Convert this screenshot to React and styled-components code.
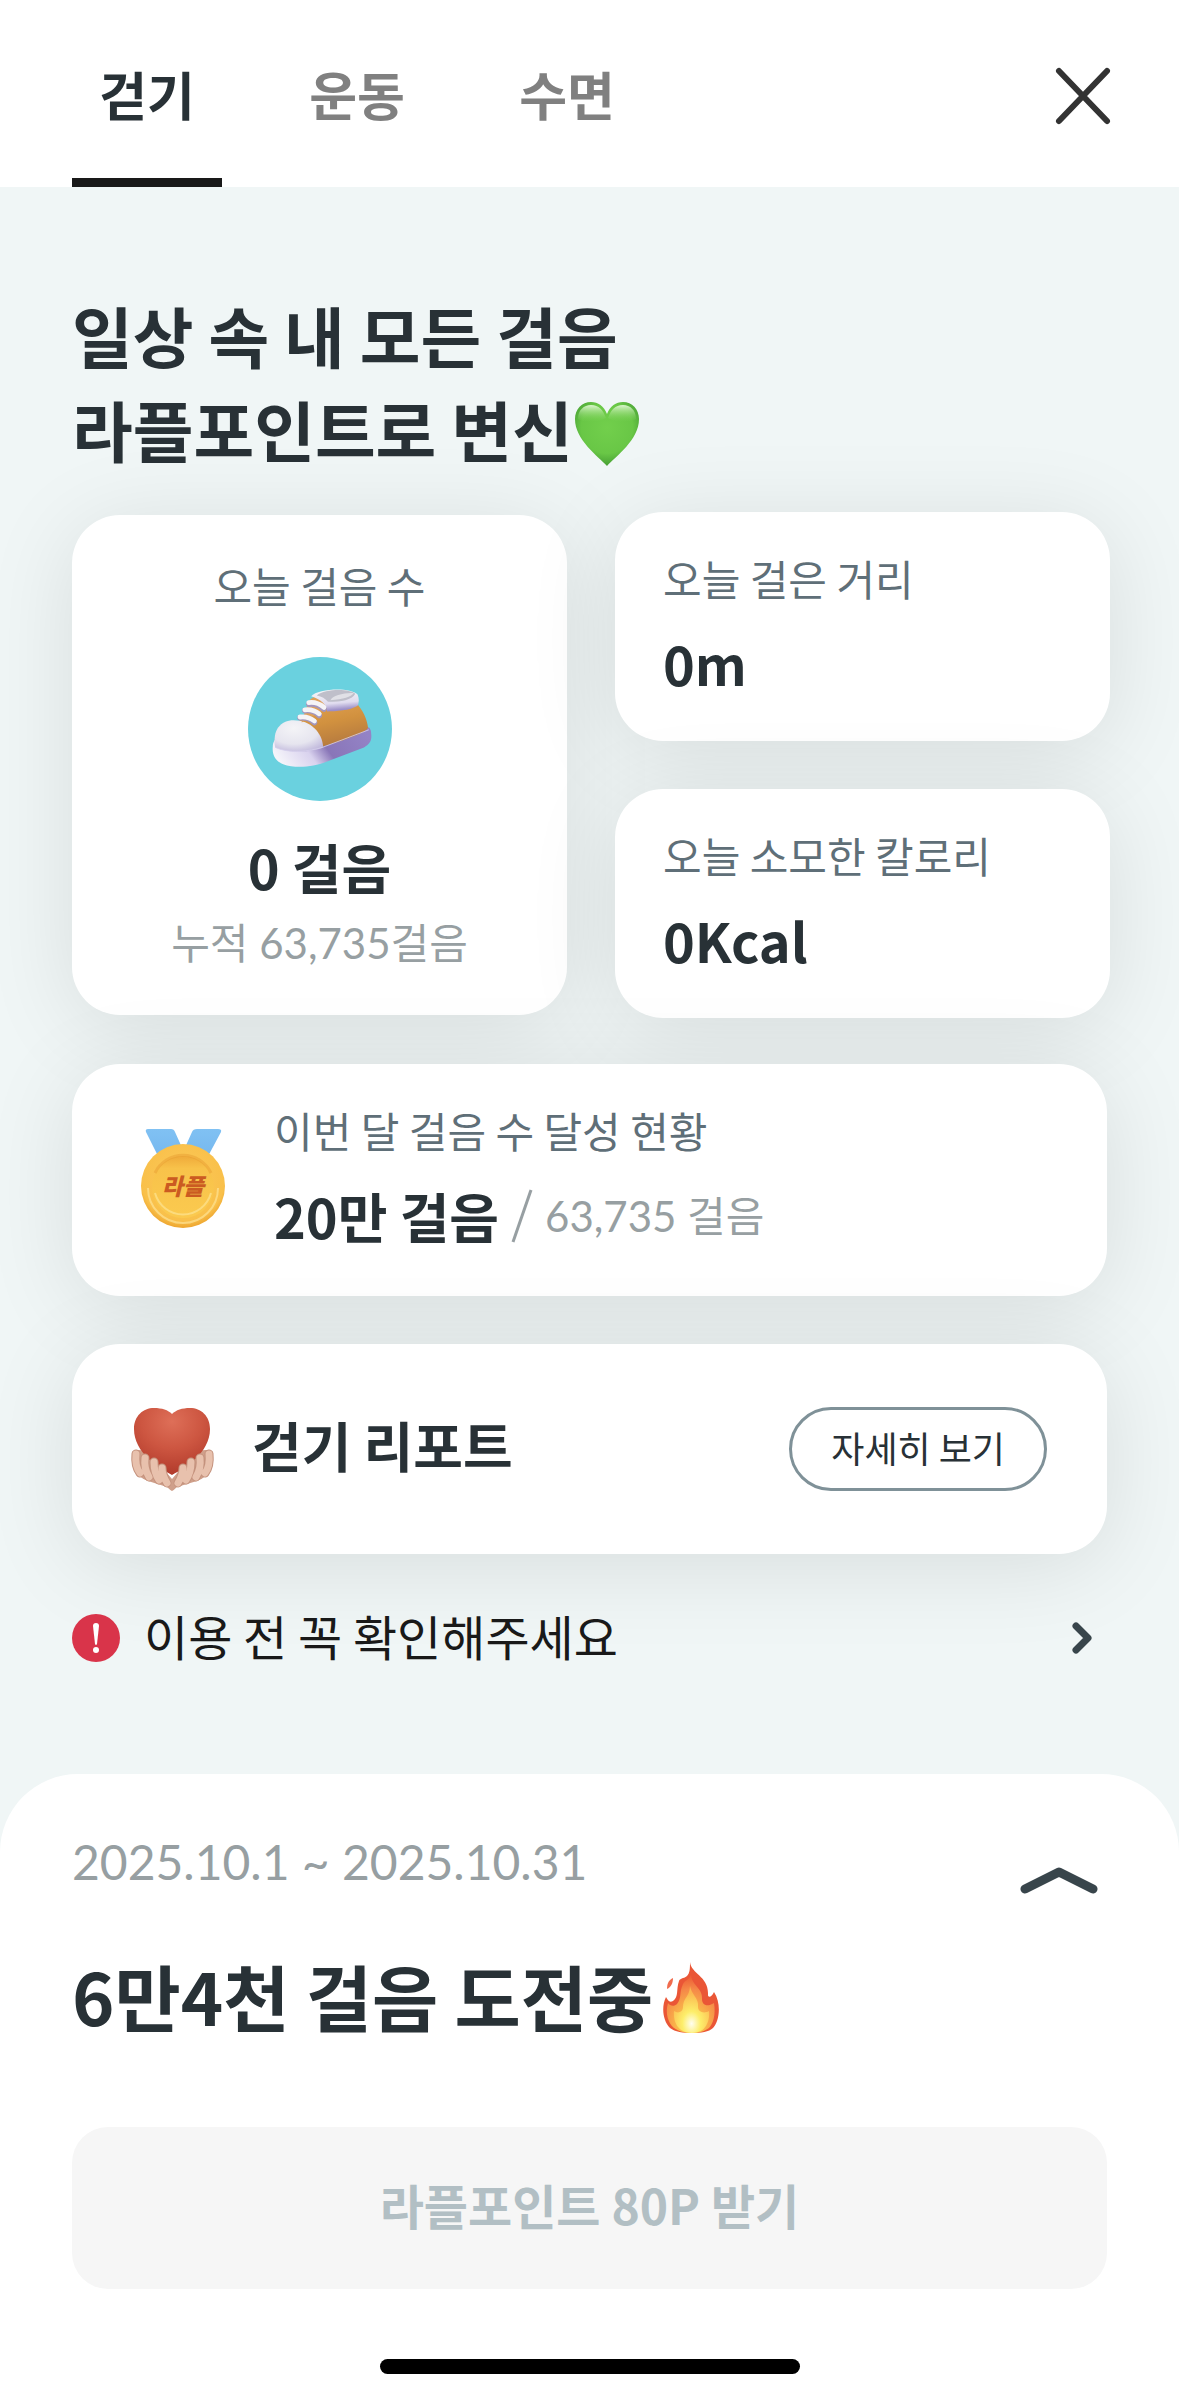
import React, { useState } from 'react';
import styled, { createGlobalStyle } from 'styled-components';

const GlobalStyle = createGlobalStyle`
  * {
    box-sizing: border-box;
  }

  body {
    margin: 0;
    background-color: #fff;
    color: #283136;
    font-family: 'Noto Sans CJK KR', sans-serif;
  }

  button {
    border: none;
    background: none;
    padding: 0;
    color: inherit;
    font-family: inherit;
    cursor: pointer;
  }

  h1, h2, p {
    margin: 0;
  }

  svg {
    display: block;
    flex-shrink: 0;
  }
`;

const Page = styled.div`
  display: flex;
  flex-direction: column;
  min-height: 100vh;
  background-color: #f0f6f6;
`;

const Header = styled.header`
  display: flex;
  justify-content: space-between;
  align-items: stretch;
  padding: 0 66px 0 72px;
  background-color: #fff;
`;

const TabList = styled.nav`
  display: flex;
  gap: 60px;
`;

const Tab = styled.button`
  width: 150px;
  padding: 54px 0 44px;
  border-bottom: 9px solid ${(props) => (props.$active ? '#191919' : 'transparent')};
  color: ${(props) => (props.$active ? '#283136' : '#808080')};
  font-size: 52px;
  line-height: 80px;
  font-weight: 700;
`;

const CloseButton = styled.button`
  display: flex;
  align-items: center;
  padding-top: 4px;
`;

const Main = styled.main`
  display: flex;
  flex-direction: column;
  padding: 100px 72px 100px;
`;

const Title = styled.h1`
  margin-bottom: 37px;
  font-size: 66px;
  line-height: 94px;
  font-weight: 700;

  svg {
    display: inline-block;
    vertical-align: -10px;
  }
`;

const Stats = styled.div`
  display: flex;
  align-items: center;
  gap: 48px;
  margin-right: -3px;
  margin-bottom: 46px;
`;

const StatColumn = styled.div`
  flex: 1;
  display: flex;
  flex-direction: column;
  gap: 48px;
`;

const Card = styled.section`
  border-radius: 48px;
  background-color: #fff;
  box-shadow: 0 12px 90px rgba(0, 0, 0, 0.1);
`;

const StepCard = styled(Card)`
  flex: 1;
  display: flex;
  flex-direction: column;
  align-items: center;
  padding: 40px 0 42px;

  svg {
    margin: 42px 0 26px;
  }
`;

const StatCard = styled(Card)`
  padding: 36px 48px 38px;
`;

const GoalCard = styled(Card)`
  display: flex;
  align-items: center;
  gap: 46px;
  margin-bottom: 48px;
  padding: 36px 66px 40px;
`;

const ReportCard = styled(Card)`
  display: flex;
  align-items: center;
  padding: 63px 60px 63px 58px;
`;

const Label = styled.p`
  color: #5f6f78;
  font-size: 42px;
  line-height: 60px;
`;

const Value = styled.p`
  font-size: 54px;
  line-height: 80px;
  font-weight: 700;

  ${Label} + & {
    margin-top: 15px;
  }
`;

const Total = styled.span`
  color: #979fa2;
  font-family: Lato, 'Noto Sans CJK KR', sans-serif;
  font-size: 42px;
  line-height: 60px;
  font-weight: 400;

  ${StepCard} & {
    margin-top: 6px;
  }
`;

const GoalRow = styled.div`
  display: flex;
  align-items: center;
  gap: 12px;
  margin-top: 16px;
`;

const ReportTitle = styled.h2`
  flex: 1;
  margin-left: 36px;
  padding-bottom: 8px;
  font-size: 54px;
  line-height: 76px;
  font-weight: 700;
`;

const DetailButton = styled.button`
  padding: 11px 39px 15px;
  border: 3px solid #7f9198;
  border-radius: 42px;
  font-size: 36px;
  line-height: 52px;
`;

const Notice = styled.button`
  display: flex;
  align-items: center;
  gap: 24px;
  width: 100%;
  margin-top: 48px;
  padding-right: 15px;
  color: #191919;
  font-size: 48px;
  line-height: 66px;
  text-align: left;
`;

const NoticeText = styled.span`
  flex: 1;
  padding-bottom: 6px;
`;

const Sheet = styled.section`
  flex: 1;
  display: flex;
  flex-direction: column;
  padding: 52px 72px 24px;
  border-radius: 78px 78px 0 0;
  background-color: #fff;
`;

const SheetHead = styled.div`
  display: flex;
  justify-content: space-between;
  align-items: flex-start;
  padding-right: 9px;
`;

const Period = styled.p`
  color: #979fa2;
  font-family: Lato, 'Noto Sans CJK KR', sans-serif;
  font-size: 48px;
  line-height: 72px;
`;

const ToggleButton = styled.button`
  padding-top: 40px;
`;

const ChallengeTitle = styled.h2`
  display: flex;
  align-items: center;
  gap: 10px;
  margin-top: 45px;
  font-size: 72px;
  line-height: 104px;
  font-weight: 700;

  svg {
    margin-top: 6px;
  }
`;

const ReceiveButton = styled.button`
  margin-top: 80px;
  padding: 41px 0 49px;
  border-radius: 36px;
  background-color: #f6f6f6;
  color: #b2bfc4;
  font-size: 48px;
  line-height: 72px;
  font-weight: 700;
`;

const HomeBar = styled.div`
  align-self: center;
  width: 420px;
  height: 15px;
  margin-top: auto;
  border-radius: 8px;
  background-color: #000;
`;

const CloseIcon = () => (
  <svg width="60" height="60" viewBox="0 0 60 60" fill="none" stroke="#333" strokeWidth="6" strokeLinecap="round">
    <path d="M6 5 54 55M54 5 6 55" />
  </svg>
);

const GreenHeart = () => (
  <svg width="68" height="66" viewBox="0 0 68 66">
    <defs>
      <radialGradient id="leaf" cx=".5" cy=".4" r=".62">
        <stop offset="0" stopColor="#72cf4c" />
        <stop offset=".65" stopColor="#69c746" />
        <stop offset="1" stopColor="#429a31" />
      </radialGradient>
      <linearGradient id="leafShine" x2="0" y2="1">
        <stop offset="0" stopColor="#e2f8d6" stopOpacity=".95" />
        <stop offset="1" stopColor="#7dd457" stopOpacity="0" />
      </linearGradient>
    </defs>
    <path d="M34 65C25 55 2 39 2 18 2 8 9 1 18 1c7 0 13 4 16 12C37 5 43 1 50 1c9 0 16 7 16 17 0 21-23 37-32 47z" fill="url(#leaf)" />
    <path d="M5 18C5 9 11 4 18 4c8 0 12 5 15 13-6 4-20 6-28 1zM63 18c0-9-6-14-13-14-8 0-12 5-15 13 6 4 20 6 28 1z" fill="url(#leafShine)" />
  </svg>
);

const ShoeIcon = () => (
  <svg width="144" height="144" viewBox="0 0 180 180">
    <defs>
      <radialGradient id="toe" cx=".4" cy=".25" r=".85">
        <stop offset="0" stopColor="#f4f4f7" />
        <stop offset=".6" stopColor="#e6e5ef" />
        <stop offset="1" stopColor="#bcb3da" />
      </radialGradient>
      <linearGradient id="sole" x1="0" y1=".6" x2="1" y2=".3">
        <stop offset="0" stopColor="#f5f4fa" />
        <stop offset=".32" stopColor="#d9d2ee" />
        <stop offset=".52" stopColor="#8976b8" />
        <stop offset="1" stopColor="#9483c6" />
      </linearGradient>
      <linearGradient id="leather" x1=".3" y1="0" x2=".6" y2="1">
        <stop offset="0" stopColor="#e2a252" />
        <stop offset=".5" stopColor="#d1913f" />
        <stop offset="1" stopColor="#b3783f" />
      </linearGradient>
      <linearGradient id="collar" x1="0" y1="0" x2=".2" y2="1">
        <stop offset=".2" stopColor="#f1f1f5" />
        <stop offset=".7" stopColor="#e0dcef" />
        <stop offset="1" stopColor="#9c8fc8" />
      </linearGradient>
    </defs>
    <circle cx="90" cy="90" r="90" fill="#6ad1df" />
    <path d="M31 112c0-6 3-10 8-13l108-11c4-2 7 2 7 8 1 9-2 13-9 17l-47 18c-15 6-38 9-54 3-10-4-14-12-13-22z" fill="url(#sole)" />
    <path d="M64 80c9-7 12-28 24-30l48 8c7 8 13 19 14 30-1 7-34 17-57 24z" fill="url(#leather)" />
    <path d="M34 113C30 91 41 79 57 79c21 0 36 15 37 34-14 6-41 8-60 0z" fill="url(#toe)" />
    <path d="M76 55c6-7 17-8 20-3 3 6 2 11 0 14L67 82z" fill="#dda05a" />
    <path d="M79 49c8-9 48-12 58-2 2 5 2 10 0 14-9 6-28 7-38 7-1-9-8-15-20-19z" fill="url(#collar)" />
    <path d="M86 48c10-8 40-9 48-2-4 8-17 10-34 10-3-4-8-7-14-8z" fill="#bfbfca" />
    <path d="M103 54c2-6 19-10 29-9-3 5-13 8-29 9z" fill="#e0e0e6" />
    <path d="M76 59c7-1 13 1 19 6M71 67c8-1 13 1 18 6M65 76c8-1 13 1 18 6" fill="none" stroke="#a296be" strokeWidth="7" strokeLinecap="round" />
    <path d="M76 57c7-1 13 1 19 6M71 66c8-1 13 1 18 5M65 75c8-1 13 1 18 5" fill="none" stroke="#f5f4f6" strokeWidth="6" strokeLinecap="round" />
    <path d="M34 113c18 8 42 5 59 0l58-22" fill="none" stroke="#d7d0ed" strokeWidth="1" />
  </svg>
);

const MedalIcon = () => (
  <svg width="90" height="102" viewBox="0 0 90 102">
    <defs>
      <linearGradient id="ribbon" x2="0" y2="1">
        <stop offset="0" stopColor="#80c1f3" />
        <stop offset="1" stopColor="#75b7ee" />
      </linearGradient>
      <radialGradient id="gold" cx=".5" cy=".42" r=".58">
        <stop offset="0" stopColor="#fbc95a" />
        <stop offset=".85" stopColor="#f9c04a" />
        <stop offset="1" stopColor="#eda52f" />
      </radialGradient>
      <linearGradient id="coin" x2="0" y2="1">
        <stop offset="0" stopColor="#efaa3a" />
        <stop offset=".2" stopColor="#f8c24a" />
        <stop offset="1" stopColor="#fbca4f" />
      </linearGradient>
    </defs>
    <path d="M10 2h23q3 0 4 3l9 20-24 8L8 5q-1-3 2-3zM80 2H59q-4 0-5 3l-9 20 23 8L83 5q1-3-3-3z" fill="url(#ribbon)" />
    <circle cx="45" cy="59" r="42" fill="url(#gold)" />
    <circle cx="45" cy="60" r="31" fill="url(#coin)" />
    <path d="M17 46a31 31 0 0 1 56 0" fill="none" stroke="#e79b2e" strokeWidth="3" opacity=".45" />
    <path d="M10 61a35 35 0 0 0 70 0" fill="none" stroke="#fde294" strokeWidth="2" opacity=".7" />
    <path d="M17 66a29 29 0 0 0 56 0" fill="none" stroke="#fde08a" strokeWidth="2" opacity=".8" />
    <text x="45" y="68" textAnchor="middle" fontSize="23" fontWeight="900" fontStyle="italic" fill="#cb5b21">라플</text>
  </svg>
);

const HeartHandsIcon = () => (
  <svg width="86" height="84" viewBox="0 0 86 84">
    <defs>
      <radialGradient id="redHeart" cx=".5" cy=".2" r=".8">
        <stop offset="0" stopColor="#de6f58" />
        <stop offset=".5" stopColor="#cd5641" />
        <stop offset="1" stopColor="#b13a2b" />
      </radialGradient>
    </defs>
    <path d="M2 46c0-4 12-4 18 0l22 26 22-26c6-4 19-4 19 0 1 14-3 23-16 28l-20 6q-3 3-5 4-2-1-5-4l-19-6C5 69 1 60 2 46z" fill="#cf9f8a" />
    <path d="M42 68C29 61 4 46 4 22 4 9 13 1 24 1c8 0 14 2 18 6 4-4 10-6 18-6 11 0 20 8 20 21 0 24-25 39-38 46z" fill="url(#redHeart)" />
    <g fill="none" strokeLinecap="round">
      <path stroke="#c4927d" strokeWidth="9" d="M6 47c-1 9 1 15 4 19M15 51c-1 8 1 14 4 19M24 55c0 7 1 12 5 18M32 61c0 6 2 10 5 15M79 47c1 9-1 15-4 19M70 51c1 8-1 14-4 19M61 55c0 7-1 12-5 18M53 61c0 6-2 10-5 15" />
      <path stroke="#e8c1ad" strokeWidth="7" d="M6 47c-1 9 1 15 4 19M15 51c-1 8 1 14 4 19M24 55c0 7 1 12 5 18M32 61c0 6 2 10 5 15M79 47c1 9-1 15-4 19M70 51c1 8-1 14-4 19M61 55c0 7-1 12-5 18M53 61c0 6-2 10-5 15" />
    </g>
  </svg>
);

const AlertIcon = () => (
  <svg width="48" height="48" viewBox="0 0 48 48">
    <circle cx="24" cy="24" r="24" fill="#d9344a" />
    <path d="M21 12q0-3 3-3t3 3l-2 18q-1 2-2 0z" fill="#fff" />
    <circle cx="24" cy="36" r="3" fill="#fff" />
  </svg>
);

const ChevronRight = () => (
  <svg width="20" height="32" viewBox="0 0 20 32" fill="none" stroke="#38454b" strokeWidth="7" strokeLinecap="round" strokeLinejoin="round">
    <path d="m4 4 12 12L4 28" />
  </svg>
);

const ChevronUp = ({ flipped }) => (
  <svg width="78" height="28" viewBox="0 0 78 28" fill="none" stroke="#38454b" strokeWidth="9" strokeLinecap="round" strokeLinejoin="round">
    <path d={flipped ? 'm5 5 34 17L73 5' : 'm5 23 34-17 34 17'} />
  </svg>
);

const FlameIcon = () => (
  <svg width="58" height="74" viewBox="0 0 58 74">
    <defs>
      <radialGradient id="fire" cx=".5" cy=".85" r=".8">
        <stop offset="0" stopColor="#fde45b" />
        <stop offset=".35" stopColor="#fab84a" />
        <stop offset=".75" stopColor="#f58a48" />
        <stop offset="1" stopColor="#ee6238" />
      </radialGradient>
      <radialGradient id="ember" cx=".5" cy=".8" r=".65">
        <stop offset="0" stopColor="#fffef0" />
        <stop offset=".4" stopColor="#fdee6a" />
        <stop offset="1" stopColor="#fbb850" />
      </radialGradient>
    </defs>
    <path d="M27 1c1 12 19 14 18 33 0 3 4 2 6-3 8 12 5 30-1 36-4 4-12 5-21 5s-17-1-22-5C0 60-2 46 3 36c2 3 3 6 7 4 6-4 3-12 6-20 1-3 4-2 8-5 3-3 3-8 3-14z" fill="#ea5636" />
    <path d="M28 14c1 11 12 13 11 24 0 5 4 9 12 4 2 12-1 21-5 25-4 3-10 5-17 5s-14-2-18-5C5 62 2 52 5 42c2 3 6 4 9 1 5-6 2-12 6-20 2-4 6-4 8-9z" fill="url(#fire)" />
    <path d="M27 25c1 8 9 12 8 21 0 5 6 7 11 4 1 10-3 22-17 22S10 61 11 50c4 3 9 1 9-4 0-9 7-11 7-21z" fill="url(#ember)" />
    <path d="M10 17c-4 2-6 5-6 11 4-2 6-6 6-11z" fill="#f06b4d" />
  </svg>
);

const tabs = ['걷기', '운동', '수면'];

const stats = [
  { label: '오늘 걸은 거리', value: '0m' },
  { label: '오늘 소모한 칼로리', value: '0Kcal' },
];

const App = () => {
  const [activeTab, setActiveTab] = useState('걷기');
  const [open, setOpen] = useState(true);

  return (
    <Page>
      <GlobalStyle />
      <Header>
        <TabList>
          {tabs.map((tab) => (
            <Tab key={tab} $active={tab === activeTab} onClick={() => setActiveTab(tab)}>
              {tab}
            </Tab>
          ))}
        </TabList>
        <CloseButton aria-label="닫기"><CloseIcon /></CloseButton>
      </Header>
      <Main>
        <Title>
          일상 속 내 모든 걸음
          <br />
          라플포인트로 변신
          <GreenHeart />
        </Title>
        <Stats>
          <StepCard>
            <Label>오늘 걸음 수</Label>
            <ShoeIcon />
            <Value>0 걸음</Value>
            <Total>누적 63,735걸음</Total>
          </StepCard>
          <StatColumn>
            {stats.map((stat) => (
              <StatCard key={stat.label}>
                <Label>{stat.label}</Label>
                <Value>{stat.value}</Value>
              </StatCard>
            ))}
          </StatColumn>
        </Stats>
        <GoalCard>
          <MedalIcon />
          <div>
            <Label>이번 달 걸음 수 달성 현황</Label>
            <GoalRow>
              <Value>20만 걸음</Value>
              <svg width="22" height="54" viewBox="0 0 22 54" stroke="#979fa2" strokeWidth="3">
                <path d="M20 1 2 53" />
              </svg>
              <Total>63,735 걸음</Total>
            </GoalRow>
          </div>
        </GoalCard>
        <ReportCard>
          <HeartHandsIcon />
          <ReportTitle>걷기 리포트</ReportTitle>
          <DetailButton>자세히 보기</DetailButton>
        </ReportCard>
        <Notice>
          <AlertIcon />
          <NoticeText>이용 전 꼭 확인해주세요</NoticeText>
          <ChevronRight />
        </Notice>
      </Main>
      <Sheet>
        <SheetHead>
          <Period>2025.10.1 ~ 2025.10.31</Period>
          <ToggleButton aria-label="펼치기" aria-expanded={open} onClick={() => setOpen(!open)}>
            <ChevronUp flipped={!open} />
          </ToggleButton>
        </SheetHead>
        <ChallengeTitle>
          6만4천 걸음 도전중
          <FlameIcon />
        </ChallengeTitle>
        <ReceiveButton>라플포인트 80P 받기</ReceiveButton>
        <HomeBar />
      </Sheet>
    </Page>
  );
};

export default App;
